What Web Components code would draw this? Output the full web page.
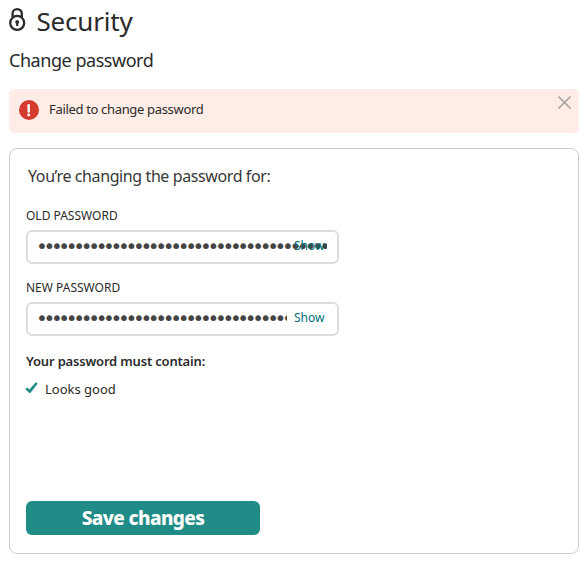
<!DOCTYPE html>
<html lang="en">
<head>
<meta charset="utf-8">
<title>Security</title>
<style>
body { margin: 0; background: #fff; color: #2b2b2b; font-family: "Noto Sans", "Open Sans", sans-serif; }
</style>
</head>
<body>
<security-page></security-page>

<script>
const define = (name, html, setup) => customElements.define(name, class extends HTMLElement {
  constructor() {
    super();
    const t = document.createElement('template');
    t.innerHTML = html;
    this.attachShadow({ mode: 'open' }).append(t.content.cloneNode(true));
  }
  connectedCallback() { if (setup) setup(this); }
});

define('page-title', `
<style>
:host { display: flex; height: 36px; gap: 9.5px; font-size: 26px; line-height: 36px; letter-spacing: -.2px; white-space: nowrap; }
svg { display: block; width: 18px; height: 28px; margin-top: 4px; }
</style>
<svg viewBox="0 0 18 28" fill="none" stroke="#2b2b2b">
  <circle cx="8.2" cy="15.9" r="7" stroke-width="2.3"/>
  <path d="M3.6 10.4V6.4a4.6 4.3 0 0 1 9.2 0V10.4" stroke-width="2.3"/>
  <path d="M8.2 13a2.1 2.1 0 0 1 1.1 3.8v2.2H7.1v-2.2A2.1 2.1 0 0 1 8.2 13z" fill="#2b2b2b" stroke="none"/>
</svg>
<slot></slot>`);

define('section-title', `
<style>:host { display: block; margin-top: 9px; font-size: 18px; line-height: 24px; letter-spacing: -.46px; white-space: nowrap; }</style>
<slot></slot>`);

define('error-alert', `
<style>
:host { display: flex; box-sizing: border-box; height: 44px; margin-top: 17px; padding: 0 7px 0 10px; border-radius: 5px; background: #feece6; }
.mark { width: 20px; height: 20px; margin-top: 11px; }
.text { flex: 1; margin-left: 10px; font-size: 13px; line-height: 40px; letter-spacing: -.33px; white-space: nowrap; }
.close { width: 15px; height: 15px; margin-top: 6px; }
</style>
<svg class="mark" viewBox="0 0 20 20">
  <circle cx="10" cy="10" r="10" fill="#d53a2f"/>
  <path d="M9.7 5.2v6.4" stroke="#fff" stroke-width="2.5" stroke-linecap="round"/>
  <circle cx="9.7" cy="15" r="1.4" fill="#fff"/>
</svg>
<span class="text"><slot></slot></span>
<svg class="close" viewBox="0 0 15 15"><path d="M1.5 1.5l12 12m0-12l-12 12" stroke="#a8a3a1" stroke-width="1.7"/></svg>`);

define('form-card', `
<style>:host { display: block; box-sizing: border-box; height: 406px; margin-top: 15px; padding: 15px 16px 0; border: 1px solid #ccc; border-radius: 8px; }</style>
<slot></slot>`);

define('card-lead', `
<style>:host { display: block; margin-left: 2px; color: #383838; font-size: 16px; line-height: 24px; letter-spacing: -.4px; white-space: nowrap; }</style>
<slot></slot>`);

define('password-field', `
<style>
:host { display: block; width: 313px; }
.label { font-size: 12px; line-height: 16px; white-space: nowrap; }
.box { position: relative; box-sizing: border-box; height: 34px; margin-top: 6px; padding-left: 10px; border: 2px solid #ddd; border-radius: 6px; }
.dots { display: block; width: var(--dots-width, 249px); height: 30px; overflow: hidden; white-space: nowrap; color: #444; font: 20px/28px "DejaVu Sans", sans-serif; letter-spacing: -4.34px; text-indent: -2px; }
.show { position: absolute; right: 12.5px; top: 1px; color: #00707c; font-size: 12px; line-height: 26px; }
</style>
<div class="label"><slot></slot></div>
<div class="box"><span class="dots"></span><span class="show">Show</span></div>`,
host => { host.shadowRoot.querySelector('.dots').textContent = '•'.repeat(+host.getAttribute('length')); });

define('rule-heading', `
<style>:host { display: block; margin-top: 15px; font-size: 13px; font-weight: 600; line-height: 20px; letter-spacing: -.18px; white-space: nowrap; }</style>
<slot></slot>`);

define('rule-item', `
<style>
:host { display: flex; margin: 8px 0 0 -1px; gap: 6px; font-size: 13px; line-height: 20px; white-space: nowrap; }
svg { width: 14px; height: 14px; margin-top: 2px; }
</style>
<svg viewBox="0 0 14 14"><path d="M.3 8.2L2.2 6.4l2.3 2.2L10.8 1.2l1.9 1.3-7.7 9.9z" fill="#1d8d85"/></svg>
<slot></slot>`);

define('primary-button', `
<style>
:host { display: block; margin-top: 102px; }
button { display: block; width: 234px; height: 34px; padding: 0; border: 0; border-radius: 6px; background: #1f8c88; color: #fff; font: 800 19px/34px "Noto Sans", "Open Sans", sans-serif; letter-spacing: -.6px; }
</style>
<button><slot></slot></button>`);

define('security-page', `
<style>
:host { display: block; padding: 3px 8px 0 9px; }
.old { margin-top: 20px; --dots-width: 289px; }
.new { margin-top: 16px; }
</style>
<page-title>Security</page-title>
<section-title>Change password</section-title>
<error-alert>Failed to change password</error-alert>
<form-card>
  <card-lead>You’re changing the password for:</card-lead>
  <password-field class="old" length="39">OLD PASSWORD</password-field>
  <password-field class="new" length="34">NEW PASSWORD</password-field>
  <rule-heading>Your password must contain:</rule-heading>
  <rule-item>Looks good</rule-item>
  <primary-button>Save changes</primary-button>
</form-card>`);
</script>
</body>
</html>
